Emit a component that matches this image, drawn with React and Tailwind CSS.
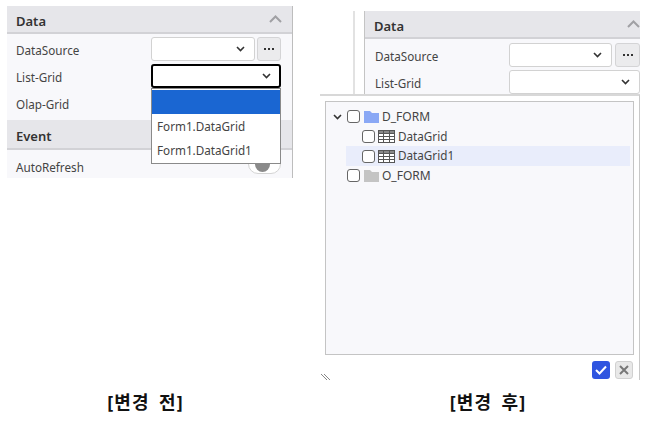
import React from "react";

const FONT = { fontFamily: '"Noto Sans", "Noto Sans CJK KR", sans-serif' };

function Chevron({ className = "" }) {
  return (
    <svg width="9" height="6" viewBox="0 0 9 6" className={className} fill="none">
      <path d="M1 1l3.5 3.5L8 1" stroke="#333" strokeWidth="1.6" />
    </svg>
  );
}

function Select({ className = "", focused = false }) {
  return (
    <div
      className={
        "h-[24px] bg-white rounded-[3px] flex items-center justify-end box-border " +
        (focused ? "border-2 border-black pr-[8px] " : "border border-[#d2d2d2] pr-[9px] ") +
        className
      }
    >
      <Chevron />
    </div>
  );
}

function Dots({ className = "" }) {
  return (
    <div className={"h-[24px] rounded-[3px] bg-[#ebebed] border border-[#d4d4d6] flex items-center justify-center gap-[2px] " + className}>
      <span className="w-[2px] h-[2px] bg-[#333]" />
      <span className="w-[2px] h-[2px] bg-[#333]" />
      <span className="w-[2px] h-[2px] bg-[#333]" />
    </div>
  );
}

function Header({ title, chevron, className = "" }) {
  return (
    <div className={"bg-[#e6e6ea] border-b-2 border-[#d2d2d6] flex items-center justify-between pl-[9px] " + className}>
      <span className="text-[13px] leading-[20px] pt-[3px] font-semibold text-[#333]">{title}</span>
      {chevron && (
        <svg width="13" height="8" viewBox="0 0 13 8" fill="none">
          <path d="M1 7l5.5-5.5L12 7" stroke="#a0a0a4" strokeWidth="2" />
        </svg>
      )}
    </div>
  );
}

function Label({ children }) {
  return <span className="block h-[24px] text-[11.7px] text-[#444] leading-[26px]">{children}</span>;
}

function Folder({ color }) {
  return (
    <svg width="15" height="12" viewBox="0 0 15 12" className="shrink-0 ml-[1px]">
      <path d="M0 0h6l2 2h7v10H0z" fill={color} />
    </svg>
  );
}

function GridIcon() {
  return (
    <svg width="17" height="13" viewBox="0 0 17 13" className="shrink-0" fill="none">
      <rect x="0.5" y="0.5" width="16" height="12" fill="#fff" stroke="#555" />
      <rect x="0.5" y="0.5" width="16" height="3" fill="#888" stroke="#555" />
      <path d="M0 6.5h17M0 9.5h17M5.5 0v13M11.5 0v13" stroke="#555" />
    </svg>
  );
}

function Check() {
  return <span className="w-[13px] h-[13px] rounded-[3px] border border-[#666] bg-white shrink-0 box-border" />;
}

function TreeRow({ indent, children, selected }) {
  return (
    <div className={"h-[19.67px] flex items-center gap-[3px] text-[11.7px] text-[#444] " + indent + (selected ? " bg-[#e9edfb]" : "")}>
      {children}
    </div>
  );
}

export default function App() {
  return (
    <div className="w-[645px] h-[424px] bg-white grid grid-cols-[320px_325px] overflow-hidden" style={FONT}>
      {/* Before */}
      <div className="flex flex-col">
        <div className="relative ml-[7px] mt-[6px] w-[286px] h-[172px] bg-[#f8f8fb] border-r border-[#bdbdbd]">
          <Header title="Data" chevron className="h-[28px] pr-[10px]" />
          <div className="grid grid-cols-[135px_130px] content-start pl-[9px] pt-[3px] gap-y-[3px] h-[86px]">
            <Label>DataSource</Label>
            <div className="flex gap-[2px]">
              <Select className="w-[104px]" />
              <Dots className="w-[24px]" />
            </div>
            <Label>List-Grid</Label>
            <Select focused className="w-[130px]" />
            <Label>Olap-Grid</Label>
          </div>
          <Header title="Event" className="h-[30px]" />
          <div className="pl-[9px] pt-[4px] flex justify-between pr-[11px] overflow-hidden h-[28px]">
            <Label>AutoRefresh</Label>
            <div className="w-[33px] h-[20px] rounded-full border border-[#d4d4d4] bg-white flex items-center pl-[6px]">
              <span className="w-[15px] h-[15px] rounded-full bg-[#8a8a8a]" />
            </div>
          </div>
          <div className="absolute left-[144px] top-[82px] w-[130px] h-[76px] bg-white border border-[#8a8a8a] pt-[1px] text-[11.7px] text-[#444] box-border">
            <div className="h-[24px] bg-[#1a66d2]" />
            <div className="h-[25px] pl-[5px] flex items-center">Form1.DataGrid</div>
            <div className="h-[24px] pl-[5px] flex items-center">Form1.DataGrid1</div>
          </div>
        </div>
        <div className="mt-[213px] w-[291px] text-center text-[18px] leading-[22px] font-bold text-[#111] tracking-[1px] [word-spacing:4px]">[변경 전]</div>
      </div>

      {/* After */}
      <div className="flex flex-col">
        <div className="relative w-[320px] h-[380px] overflow-hidden">
          <div className="ml-[33px] w-[287px] h-[95px] mt-[11px] border-l-2 border-[#e2e2e2] pl-[9px]">
            <div className="bg-[#f8f8fb] border-l border-[#c4c4c4] h-[84px]">
              <Header title="Data" chevron className="h-[28px] pr-0" />
              <div className="grid grid-cols-[134px_131px] pl-[10px] pt-[4px] gap-y-[3px]">
                <Label>DataSource</Label>
                <div className="flex gap-[3px] w-[131px]">
                  <Select className="w-[103px]" />
                  <Dots className="w-[25px]" />
                </div>
                <Label>List-Grid</Label>
                <Select className="w-[131px]" />
              </div>
            </div>
          </div>
          <div className="h-[286px] -mt-[12px] relative bg-white border-t-2 border-[#d8d8d8] border-r border-r-[#c8c8c8] pt-[5px] pl-[5px] pr-[5px]">
            <div className="h-[254px] bg-[#f8f8fb] border border-[#c4c4c4] pt-[5px] pl-[7px] pr-[3px]">
              <TreeRow indent="">
                <Chevron className="mr-[2px]" />
                <Check />
                <Folder color="#8aa8f5" />
                <span className="text-[12px]">D_FORM</span>
              </TreeRow>
              <TreeRow indent="pl-[29px]">
                <Check />
                <GridIcon />
                <span>DataGrid</span>
              </TreeRow>
              <TreeRow indent="ml-[13px] pl-[16px]" selected>
                <Check />
                <GridIcon />
                <span>DataGrid1</span>
              </TreeRow>
              <TreeRow indent="pl-[14px]">
                <Check />
                <Folder color="#c4c4c4" />
                <span className="text-[12px]">O_FORM</span>
              </TreeRow>
            </div>
            <div className="flex justify-end gap-[5px] pt-[6px] pr-[1px]">
              <div className="w-[18px] h-[18px] rounded-[3px] bg-[#2f55e0] flex items-center justify-center">
                <svg width="12" height="10" viewBox="0 0 12 10" fill="none">
                  <path d="M1 5l3.5 3.5L11 1.5" stroke="#fff" strokeWidth="2" />
                </svg>
              </div>
              <div className="w-[18px] h-[18px] rounded-[3px] bg-[#e8e8e8] border border-[#d0d0d0] flex items-center justify-center">
                <svg width="10" height="10" viewBox="0 0 10 10" fill="none">
                  <path d="M1 1l8 8M9 1l-8 8" stroke="#777" strokeWidth="2" />
                </svg>
              </div>
            </div>
            <svg width="9" height="6" viewBox="0 0 9 6" className="absolute left-[1px] bottom-0" fill="none">
              <path d="M0 0l6 6M3 0l6 6" stroke="#888" strokeWidth="1" />
            </svg>
          </div>
        </div>
        <div className="mt-[11px] w-[336px] text-center text-[18px] leading-[22px] font-bold text-[#111] tracking-[1px] [word-spacing:4px]">[변경 후]</div>
      </div>
    </div>
  );
}
